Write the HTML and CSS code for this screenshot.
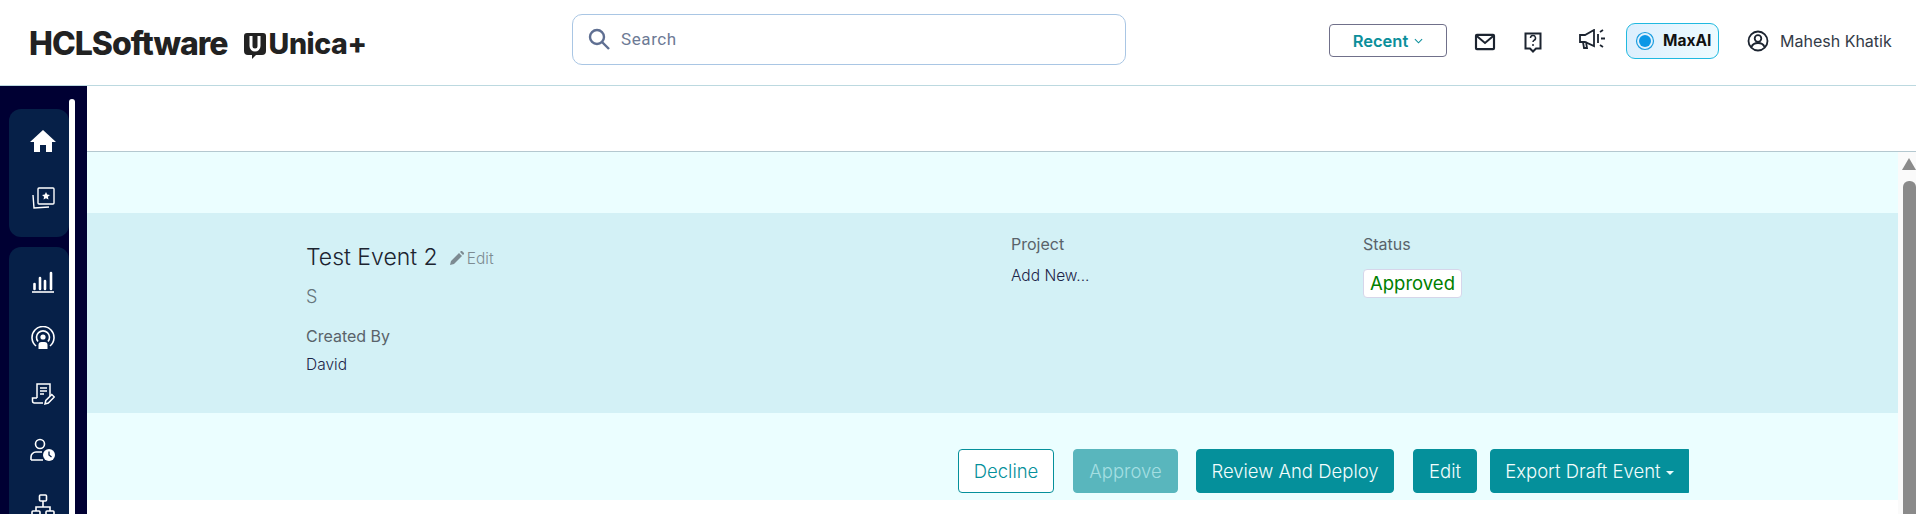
FILE: index.html
```html
<!DOCTYPE html>
<html lang="en">
<head>
<meta charset="utf-8">
<title>Test Event 2</title>
<link rel="stylesheet" href="styles.css">
</head>
<body>
<header class="topbar">
  <div class="brand">
    <span class="brand-hcl">HCLSoftware</span>
    <svg class="brand-mark" viewBox="0 0 24 28" width="24" height="28"><path d="M4 1h16a3 3 0 0 1 3 3v15a4 4 0 0 1-4 4h-6l-4 4v-4H5a4 4 0 0 1-4-4V4a3 3 0 0 1 3-3z" fill="#222"/><path d="M8 4v10a4 4 0 0 0 8 0V4" fill="none" stroke="#fff" stroke-width="3"/></svg>
    <span class="brand-unica">Unica+</span>
  </div>
  <div class="search">
    <svg class="search-icon" viewBox="0 0 24 24" width="24" height="24"><circle cx="10" cy="10" r="7" fill="none" stroke="#5f6f92" stroke-width="2.4"/><path d="M15 15l7 7" stroke="#5f6f92" stroke-width="2.4"/></svg>
    <span class="search-text">Search</span>
  </div>
  <div class="top-actions">
    <div class="recent">Recent <svg viewBox="0 0 10 6" width="9" height="6"><path d="M1 1l4 4 4-4" fill="none" stroke="#0b8f9b" stroke-width="1.2"/></svg></div>
    <svg class="ic-mail" viewBox="0 0 24 20" width="22" height="18"><rect x="2" y="2" width="20" height="16" rx="1" fill="none" stroke="#1c2430" stroke-width="2.4"/><path d="M2.5 3l9.5 8 9.5-8" fill="none" stroke="#1c2430" stroke-width="2.2"/></svg>
    <svg class="ic-help" viewBox="0 0 18 21" width="18" height="21"><path d="M1.500 1.500h15v15h-4.500l-3 3-3-3H1.500z" fill="none" stroke="#1c2430" stroke-width="2"/><path d="M6.500 6a2.500 2.500 0 1 1 3.500 2.300c-.8.400-1 .9-1 1.700" fill="none" stroke="#1c2430" stroke-width="1.500"/><circle cx="9" cy="13" r="1" fill="#1c2430"/></svg>
    <svg class="ic-horn" viewBox="0 0 26 20" width="26" height="20"><path d="M1 6h5l9-5v16L6 13H1zM4 13l1 6h3l-1-6" fill="none" stroke="#1c2430" stroke-width="1.800"/><path d="M19 5v9M21 3l3-2M21 16l3 2M22 9.500h4" stroke="#1c2430" stroke-width="1.800"/></svg>
    <div class="maxai">
      <svg viewBox="0 0 20 20" width="20" height="20"><circle cx="10" cy="10" r="8.500" fill="none" stroke="#1a9ddf" stroke-width="1.200"/><circle cx="10" cy="10" r="6" fill="#0b97e6"/></svg>
      <span>MaxAI</span>
    </div>
    <div class="user">
      <svg viewBox="0 0 22 22" width="22" height="22"><circle cx="11" cy="11" r="9.500" fill="none" stroke="#1c2430" stroke-width="1.800"/><circle cx="11" cy="8.500" r="3.300" fill="none" stroke="#1c2430" stroke-width="1.800"/><path d="M4.500 17c1-3 3.500-4 6.500-4s5.500 1 6.500 4" fill="none" stroke="#1c2430" stroke-width="1.800"/></svg>
      <span>Mahesh Khatik</span>
    </div>
  </div>
</header>
<div class="layout">
  <aside class="sidebar">
    <div class="side-col">
      <nav class="side-group side-group-first">
        <div class="side-item"><svg viewBox="0 0 26 22" width="26" height="22"><path d="M13 0L0 12h4v10h6v-7h6v7h6V12h4z" fill="#fff"/></svg></div>
        <div class="side-item side-item-star"><svg viewBox="0 0 24 24" width="24" height="24"><rect x="7" y="1" width="16" height="16" rx="1" fill="none" stroke="#fff" stroke-width="1.400"/><path d="M15 5l1.200 2.600 2.800.3-2.100 1.900.6 2.800-2.500-1.400-2.500 1.400.6-2.800L11 7.900l2.800-.3z" fill="#fff"/><path d="M2 8l1 13 15-1" fill="none" stroke="#fff" stroke-width="1.400"/></svg></div>
      </nav>
      <nav class="side-group side-group-second">
        <div class="side-item"><svg viewBox="0 0 24 22" width="24" height="22"><path d="M1 21h22" stroke="#fff" stroke-width="1.600"/><path d="M3.500 18v-5M9 18V7M14 18v-8M20 18V2" stroke="#fff" stroke-width="2.600" stroke-linecap="round"/></svg></div>
        <div class="side-item"><svg viewBox="0 0 24 24" width="24" height="24"><path d="M5 20a11 11 0 1 1 14 0" fill="none" stroke="#fff" stroke-width="1.600"/><path d="M7 15.500a6.500 6.500 0 1 1 10 0" fill="none" stroke="#fff" stroke-width="1.600"/><circle cx="12" cy="11" r="2.600" fill="#fff"/><path d="M7.500 23v-4a3 3 0 0 1 3-3h3a3 3 0 0 1 3 3v4z" fill="#fff"/></svg></div>
        <div class="side-item"><svg viewBox="0 0 24 24" width="24" height="24"><path d="M6 16V2h13v12M9 6h7M9 9h7M9 12h4" fill="none" stroke="#fff" stroke-width="1.500"/><path d="M6 16H1.500v3a2 2 0 0 0 2 2H12" fill="none" stroke="#fff" stroke-width="1.500"/><path d="M14 22l.8-3.500 6-6 2.500 2.500-6 6z" fill="none" stroke="#fff" stroke-width="1.500"/></svg></div>
        <div class="side-item"><svg viewBox="0 0 26 24" width="26" height="24"><circle cx="10" cy="6" r="4.500" fill="none" stroke="#fff" stroke-width="1.600"/><path d="M1 22v-3a5 5 0 0 1 5-5h6M1 22h12" fill="none" stroke="#fff" stroke-width="1.600"/><circle cx="19" cy="17" r="6" fill="#fff"/><path d="M19 13.500V17l2.500 2" fill="none" stroke="#062048" stroke-width="1.300"/></svg></div>
        <div class="side-item"><svg viewBox="0 0 24 24" width="24" height="24"><rect x="8.500" y="1" width="7" height="6" rx="1" fill="none" stroke="#fff" stroke-width="1.600"/><rect x="1" y="17" width="8" height="6" rx="1" fill="none" stroke="#fff" stroke-width="1.600"/><rect x="15" y="17" width="8" height="6" rx="1" fill="none" stroke="#fff" stroke-width="1.600"/><path d="M12 7v6M5 17v-4h14v4" fill="none" stroke="#fff" stroke-width="1.600"/></svg></div>
      </nav>
    </div>
    <div class="side-scroll"></div>
  </aside>
  <div class="main">
    <div class="main-top"></div>
    <div class="main-body">
      <div class="content">
        <div class="content-lead"></div>
        <section class="band">
          <div class="band-col band-col-name">
            <div class="title-row">
              <h1 class="title">Test Event 2</h1>
              <span class="title-edit">
                <svg viewBox="0 0 14 14" width="14" height="14"><path d="M0 14l1-4 8-8 3 3-8 8zM10 1l1-1a1 1 0 0 1 1 0l2 2a1 1 0 0 1 0 1l-1 1z" fill="#7d8b92"/></svg>
                Edit
              </span>
            </div>
            <p class="subtitle">S</p>
            <p class="label label-created">Created By</p>
            <p class="value">David</p>
          </div>
          <div class="band-col band-col-project">
            <p class="label">Project</p>
            <p class="value value-project">Add New...</p>
          </div>
          <div class="band-col">
            <p class="label">Status</p>
            <span class="badge">Approved</span>
          </div>
        </section>
        <div class="actions">
          <button class="btn btn-outline btn-decline">Decline</button>
          <button class="btn btn-faded btn-approve">Approve</button>
          <button class="btn btn-review">Review And Deploy</button>
          <button class="btn btn-edit">Edit</button>
          <button class="btn btn-export">Export Draft Event <i class="caret"></i></button>
        </div>
      </div>
      <div class="scrollbar">
        <div class="scroll-arrow"></div>
        <div class="scroll-thumb"></div>
      </div>
    </div>
  </div>
</div>
</body>
</html>
```
FILE: styles.css
```css
* { box-sizing: border-box; }
html, body { margin: 0; height: 514px; overflow: hidden; background: #fff; }
body { font-family: "Inter", "Liberation Sans", sans-serif; color: #1c2430; }
p, h1 { margin: 0; font-weight: 400; }

.topbar { height: 86px; display: flex; align-items: center; border-bottom: 1px solid #bcd9e0; }
.brand { width: 572px; padding-left: 29px; margin-top: 2px; display: flex; align-items: center; color: #222; }
.brand-hcl { font-size: 32px; font-weight: 800; letter-spacing: -1px; }
.brand-mark { margin-left: 15px; margin-top: 4px; }
.brand-unica { font-size: 28.500px; font-weight: 800; margin-left: 2px; letter-spacing: -0.4px; }

.search { width: 554px; height: 51px; margin-top: -6px; border: 1px solid #a9c6e4; border-radius: 10px; display: flex; align-items: center; padding: 0 0 2px 14px; }
.search-text { font-family: "Roboto", sans-serif; font-size: 17px; letter-spacing: 0.6px; color: #6d7a95; margin-left: 10px; }

.top-actions { margin-left: 203px; display: flex; align-items: center; height: 60px; margin-top: -4px; }
.recent { width: 118px; height: 33px; border: 1px solid #70708a; border-radius: 4px; display: flex; align-items: center; justify-content: center; gap: 6px; font-size: 16.500px; font-weight: 600; color: #0b8f9b; }
.ic-mail { margin-left: 27px; margin-top: 2px; }
.ic-help { margin-left: 28px; margin-top: 3px; }
.ic-horn { margin-left: 37px; margin-top: -3px; }
.maxai { margin-left: 21px; width: 93px; height: 36px; border: 1px solid #20b9e0; border-radius: 9px; background: linear-gradient(100deg, #dceefd, #eefbff); display: flex; align-items: center; padding-left: 8px; gap: 8px; font-size: 15.500px; font-weight: 700; color: #111; }
.user { margin-left: 28px; display: flex; align-items: center; gap: 11px; font-size: 16px; color: #333b47; white-space: nowrap; }

.layout { display: flex; height: 428px; }
.sidebar { width: 87px; flex: none; background: #000033; display: flex; padding-left: 9px; }
.side-col { width: 60px; padding-top: 23px; }
.side-group { background: #062048; border-radius: 12px; display: flex; flex-direction: column; align-items: center; }
.side-group-first { height: 128px; padding-top: 4px; margin-bottom: 10px; }
.side-group-second { height: 280px; padding-top: 7px; border-radius: 12px 12px 0 0; }
.side-item { height: 56px; width: 100%; padding-left: 8px; display: flex; align-items: center; justify-content: center; flex: none; }
.side-item-star { margin-top: 2px; }
.side-scroll { width: 6px; background: #fff; margin-top: 13px; border-radius: 3px 3px 0 0; }

.main { flex: 1; min-width: 0; display: flex; flex-direction: column; }
.main-top { flex: none; border-bottom: 1px solid #b4c8d0; height: 66px; }
.main-body { flex: 1; display: flex; min-height: 0; }
.content { flex: 1; height: 348px; background: #ebfeff; display: flex; flex-direction: column; }
.content-lead { height: 61px; flex: none; }

.band { height: 200px; flex: none; background: #d3f1f6; display: flex; padding-left: 219px; padding-top: 21px; }
.band-col-name { width: 705px; padding-top: 9px; }
.band-col-project { width: 352px; }
.title-row { display: flex; align-items: center; gap: 12px; }
.title { font-size: 23px; line-height: 28px; color: #1c2430; font-weight: 300; }
.title-edit { font-size: 15.500px; color: #7d8b92; display: inline-flex; align-items: center; gap: 3px; margin-top: 2px; font-weight: 300; }
.subtitle { font-size: 18px; line-height: 24px; color: #66757c; margin-top: 14px; font-weight: 300; }
.label { font-size: 16px; line-height: 20px; color: #59636a; }
.label-created { margin-top: 17px; }
.value { font-size: 15.500px; line-height: 20px; color: #1c2448; margin-top: 9px; font-weight: 300; }
.value-project { margin-top: 12px; }
.badge { display: inline-block; margin-top: 15px; width: 99px; height: 29px; line-height: 27px; text-align: center; font-size: 18.500px; color: #008000; background: #fff; border: 1px solid #d6d6ea; border-radius: 4px; }

.actions { display: flex; align-items: flex-start; padding-top: 36px; padding-left: 871px; }
.btn { height: 44px; border-radius: 4px; font-family: inherit; font-size: 18.500px; font-weight: 300; border: 1px solid #05909b; background: #05909b; color: #f2fdfd; padding: 0; flex: none; }
.btn-outline { background: #fff; color: #05909b; }
.btn-faded { background: #59b6bd; border-color: #59b6bd; color: #a4dfe2; }
.btn-decline { width: 96px; margin-right: 19px; }
.btn-approve { width: 105px; margin-right: 18px; }
.btn-review { width: 198px; margin-right: 19px; }
.btn-edit { width: 64px; margin-right: 13px; }
.btn-export { width: 199px; border-radius: 4px 0 0 4px; }
.caret { display: inline-block; border: 4px solid transparent; border-top-color: #e8fbfc; border-bottom: 0; vertical-align: middle; }

.scrollbar { width: 18px; flex: none; background: #fafafa; height: 362px; padding-left: 5px; padding-top: 6px; }
.scroll-arrow { width: 0; height: 0; margin-left: -1px; border-left: 7px solid transparent; border-right: 7px solid transparent; border-bottom: 12px solid #8a8a8a; }
.scroll-thumb { width: 13px; height: 340px; margin-top: 11px; background: #8a8a8a; border-radius: 6px 6px 0 0; }
```
